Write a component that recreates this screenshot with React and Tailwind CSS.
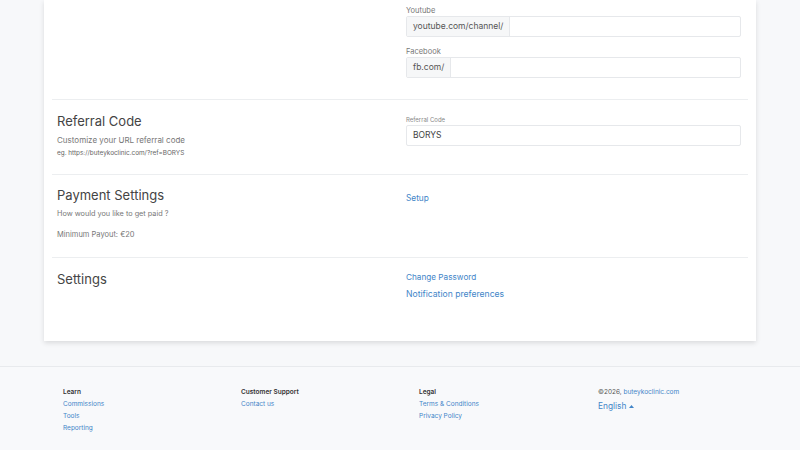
const font = { fontFamily: 'Inter, "Liberation Sans", sans-serif' };

function PrefixInput({ label, prefix }) {
  return (
    <div>
      <div className="text-[7.5px] leading-[8px] text-[#777]">{label}</div>
      <div className="mt-[1px] flex h-[21px] rounded-[2px] border border-[#e6e8eb] bg-white">
        <span className="flex items-center border-r border-[#e6e8eb] bg-[#f6f7f8] px-[6px] text-[8.5px] text-[#555]">
          {prefix}
        </span>
        <span className="flex-1" />
      </div>
    </div>
  );
}

function Section({ children, first, className }) {
  return (
    <div className={`mx-2 grid grid-cols-[349px_1fr] pl-[5px] pr-[7px] ${first ? '' : 'border-t border-[#eceef0]'} ${className}`}>
      {children}
    </div>
  );
}

const Heading = ({ children }) => (
  <div className="text-[13px] leading-[18px] text-[#444]">{children}</div>
);

const Link = ({ children, className = '' }) => (
  <a href="#" className={`block text-[#4285c8] ${className}`}>{children}</a>
);

export default function App() {
  return (
    <div className="min-h-[450px] bg-[#f7f8fa]" style={font}>
      <div className="mx-[44px] bg-white shadow-[0_2px_5px_rgba(0,0,0,0.12)]">
        <Section first className="h-[99px] pt-[7px]">
          <div />
          <div className="flex flex-col gap-[11px]">
            <PrefixInput label="Youtube" prefix="youtube.com/channel/" />
            <PrefixInput label="Facebook" prefix="fb.com/" />
          </div>
        </Section>

        <Section className="h-[75px] pt-[12px]">
          <div>
            <Heading>Referral Code</Heading>
            <div className="mt-[5px] text-[8px] leading-[11px] text-[#777]">Customize your URL referral code</div>
            <div className="mt-[3px] text-[6.4px] leading-[8px] text-[#666]">eg. https://buteykoclinic.com/?ref=BORYS</div>
          </div>
          <div className="pt-[4px]">
            <div className="text-[6px] leading-[8px] text-[#888]">Referral Code</div>
            <div className="mt-[1px] flex h-[21px] items-center rounded-[2px] border border-[#e6e8eb] px-[6px] text-[8.5px] text-[#444]">
              BORYS
            </div>
          </div>
        </Section>

        <Section className="h-[83px] pt-[11px]">
          <div>
            <Heading>Payment Settings</Heading>
            <div className="mt-[4px] text-[7.3px] leading-[11px] text-[#777]">How would you like to get paid ?</div>
            <div className="mt-[10px] text-[7.5px] leading-[11px] text-[#777]">Minimum Payout: €20</div>
          </div>
          <div className="pt-[7px]">
            <Link className="text-[8.3px] leading-[11px]">Setup</Link>
          </div>
        </Section>

        <Section className="h-[84px] pt-[12px]">
          <div>
            <Heading>Settings</Heading>
          </div>
          <div className="pt-[2px]">
            <Link className="text-[8.2px] leading-[10px]">Change Password</Link>
            <Link className="mt-[7px] text-[8.6px] leading-[11px]">Notification preferences</Link>
          </div>
        </Section>
      </div>

      <footer className="mt-[25px] border-t border-[#e8eaed] bg-[#f8f9fb] pb-[20px] pt-[19px]">
        <div className="ml-[63px] grid grid-cols-[178px_178px_178px_1fr] text-[6.5px] leading-[12px]">
          <div>
            <div className="font-semibold text-[#333]">Learn</div>
            <Link>Commissions</Link>
            <Link>Tools</Link>
            <Link>Reporting</Link>
          </div>
          <div>
            <div className="font-semibold text-[#333]">Customer Support</div>
            <Link>Contact us</Link>
          </div>
          <div>
            <div className="font-semibold text-[#333]">Legal</div>
            <Link>Terms &amp; Conditions</Link>
            <Link>Privacy Policy</Link>
          </div>
          <div className="pl-px">
            <div className="text-[#555]">
              ©2026, <a href="#" className="text-[#4285c8]">buteykoclinic.com</a>
            </div>
            <div className="mt-[2px] flex items-center gap-[3px] text-[8.3px] text-[#4285c8]">
              English
              <svg width="5" height="3" viewBox="0 0 5 3" className="fill-current">
                <path d="M0 3 L2.5 0 L5 3 Z" />
              </svg>
            </div>
          </div>
        </div>
      </footer>
    </div>
  );
}
